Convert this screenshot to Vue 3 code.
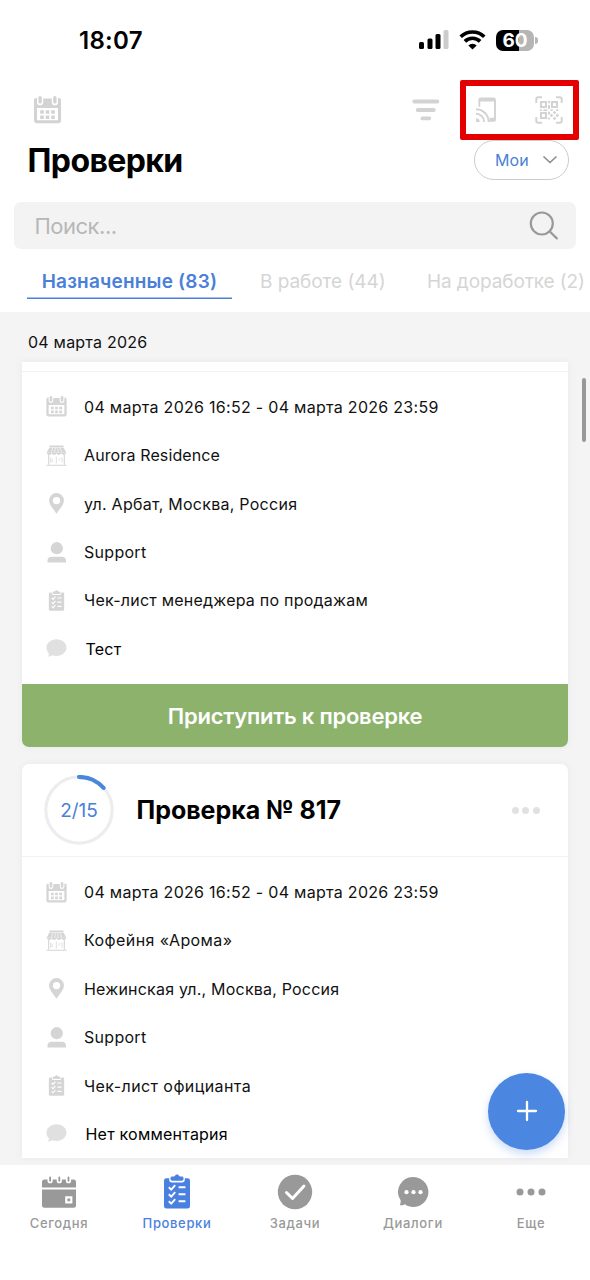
<script setup>
const checks = [
  {
    id: 816,
    first: true,
    rows: [
      ['calendar', '04 марта 2026 16:52 - 04 марта 2026 23:59'],
      ['store', 'Aurora Residence'],
      ['pin', 'ул. Арбат, Москва, Россия'],
      ['user', 'Support'],
      ['list', 'Чек-лист менеджера по продажам'],
      ['comment', 'Тест'],
    ],
  },
  {
    id: 817,
    first: false,
    rows: [
      ['calendar', '04 марта 2026 16:52 - 04 марта 2026 23:59'],
      ['store', 'Кофейня «Арома»'],
      ['pin', 'Нежинская ул., Москва, Россия'],
      ['user', 'Support'],
      ['list', 'Чек-лист официанта'],
      ['comment', 'Нет комментария'],
    ],
  },
]
const nav = [
  ['today', 'Сегодня'],
  ['checks', 'Проверки'],
  ['tasks', 'Задачи'],
  ['dialogs', 'Диалоги'],
  ['more', 'Еще'],
]
</script>

<template>
  <div class="screen">
    <svg class="defs" width="0" height="0">
      <symbol id="calendar" viewBox="0 0 27 28">
        <path d="M2.2 2H3v4.2a3 3 0 0 0 6.2 0V2.6h8.6v3.6a3 3 0 0 0 6.2 0V2h.8A2.2 2.2 0 0 1 27 4.2v20.6a2.4 2.4 0 0 1-2.4 2.4H2.4A2.4 2.4 0 0 1 0 24.8V4.2A2.2 2.2 0 0 1 2.2 2zM3 12v12.200h21V12z" fill="currentColor" fill-rule="evenodd" />
        <rect x="4.400" y="0" width="3.400" height="7.600" rx="1.700" fill="currentColor" />
        <rect x="19.200" y="0" width="3.400" height="7.600" rx="1.700" fill="currentColor" />
        <path d="M6.200 14.200h3.600v3.600H6.200zM11.700 14.200h3.600v3.600h-3.600zM17.200 14.200h3.600v3.600h-3.600zM6.200 19.400h3.600V23H6.200zM11.700 19.400h3.600V23h-3.600zM17.200 19.400h3.600V23h-3.600z" fill="currentColor" />
      </symbol>
      <symbol id="store" viewBox="0 0 20 21">
        <path d="M3 .4h14V2H3zM3 2.600h14l2.800 5H.2z" fill="currentColor" />
        <path d="M6.300 2.600 4.800 7.600M8.800 2.600 8.200 7.600M11.200 2.600l.6 5M13.700 2.600l1.500 5" stroke="#fff" stroke-width=".6" fill="none" />
        <path d="M.4 7.600h19.200c0 3-3.800 3-4.800.6-.9 2.200-4 2.200-4.800 0-.8 2.200-3.900 2.200-4.800 0C4.200 10.600.4 10.600.4 7.600z" fill="currentColor" />
        <path d="M2.200 10v9.500M17.800 10v9.500M0 20.200h20" stroke="currentColor" stroke-width="1.100" fill="none" />
        <path d="M4.200 12.500v5.500M9.800 11.500v7M6.500 13.500l-1.300 2 1.300 1.500M15.500 12.500v5M12 15.500l1.800-2.500" stroke="currentColor" stroke-width=".8" fill="none" />
      </symbol>
      <symbol id="pin" viewBox="0 0 20 21">
        <path d="M10 0a7.400 7.400 0 0 1 7.400 7.400C17.400 12 13.200 15.500 10 20.800 6.800 15.500 2.600 12 2.600 7.400A7.400 7.400 0 0 1 10 0zm0 3.900a3.700 3.700 0 1 0 0 7.400 3.700 3.700 0 0 0 0-7.400z" fill="currentColor" fill-rule="evenodd" />
      </symbol>
      <symbol id="user" viewBox="0 0 20 21">
        <circle cx="10.300" cy="6.200" r="6.100" fill="currentColor" />
        <path d="M1 20.500v-1.700c0-2.500 1.600-4 4-4h10.500c2.400 0 4 1.500 4 4v1.700z" fill="currentColor" />
      </symbol>
      <symbol id="clipboard" viewBox="0 0 26 35">
        <path d="M2.400 4.200h2.800V6a2.400 2.400 0 0 0 2.400 2.400h10.800A2.400 2.400 0 0 0 20.800 6V4.200h2.800A2.400 2.400 0 0 1 26 6.600v25.600a2.400 2.400 0 0 1-2.400 2.400H2.400A2.400 2.400 0 0 1 0 32.200V6.600a2.400 2.400 0 0 1 2.400-2.400z" fill="currentColor" />
        <path d="M8.300 2.600h1.900C11.300 1 12 .4 13 .4s1.700.6 2.800 2.200h1.900c1.200 0 1.800.6 1.800 1.500v1c0 1-.7 1.600-1.800 1.600H8.300c-1.100 0-1.800-.6-1.800-1.600v-1c0-.9.6-1.500 1.800-1.500z" fill="currentColor" />
        <path d="m4.800 13.300 2.400 2.300 4-4.400M4.800 20.300l2.400 2.300 4-4.400M4.800 27.300l2.400 2.300 4-4.400M14.600 13.300h6.800M14.600 20.300h6.800M14.600 27.300h6.800" stroke="#fff" stroke-width="1.900" fill="none" />
      </symbol>
      <symbol id="list" viewBox="0 0 20 21">
        <use href="#clipboard" x="2" y="0" width="16" height="21" />
      </symbol>
      <symbol id="comment" viewBox="0 0 20 21">
        <path d="M10 1.200C15.800 1.200 20 4.900 20 9.600s-4.200 8.300-10 8.300c-1.600 0-3-.2-4.300-.7-1.200.8-2.600 1.200-4.200 1.200.5-.7.900-1.600 1-2.700C.9 14.100 0 12 0 9.600 0 4.900 4.200 1.200 10 1.200z" fill="currentColor" opacity=".75" />
      </symbol>
      <symbol id="today" viewBox="0 0 36 36">
        <path d="M3.500 5.500h3v1.200a2.600 2.600 0 0 0 5.200 0V5.500h4V6.700a2.600 2.600 0 0 0 5.200 0V5.500h4v1.200a2.600 2.600 0 0 0 5.200 0V5.500h2.400A2.500 2.500 0 0 1 35 8v5.500H1V8a2.500 2.500 0 0 1 2.500-2.500zM1 15.500h34v15.700a2.500 2.500 0 0 1-2.500 2.500h-29A2.500 2.500 0 0 1 1 31.200zM24.200 22.200v7.200h7.200v-7.200zM26.400 24.400h2.800v2.800h-2.800z" fill="currentColor" fill-rule="evenodd" />
        <path d="M9.100 3.300v3.500M18.300 3.300v3.500M27.500 3.300v3.500" stroke="currentColor" stroke-width="1.800" stroke-linecap="round" />
      </symbol>
      <symbol id="checks" viewBox="0 0 36 36">
        <use href="#clipboard" x="5" y="0" width="26" height="35" />
      </symbol>
      <symbol id="tasks" viewBox="0 0 36 36">
        <circle cx="18" cy="18" r="17.200" fill="currentColor" />
        <path d="m9.500 18.500 6 6L27 12" stroke="#fff" stroke-width="3" stroke-linecap="round" stroke-linejoin="round" fill="none" />
      </symbol>
      <symbol id="dialogs" viewBox="0 0 36 36">
        <path d="M18.500 3A15 15 0 1 1 9.700 30.200C8.300 31.200 6.500 31.500 4.700 31.300c.8-1.400 1-3.200 1-4.800A15 15 0 0 1 18.500 3z" fill="currentColor" />
        <g fill="#fff"><circle cx="11.500" cy="18.200" r="2.100" /><circle cx="18.500" cy="18.200" r="2.100" /><circle cx="25.500" cy="18.200" r="2.100" /></g>
      </symbol>
      <symbol id="more" viewBox="0 0 36 36">
        <g fill="currentColor"><circle cx="7" cy="18" r="3.500" /><circle cx="18" cy="18" r="3.500" /><circle cx="29" cy="18" r="3.500" /></g>
      </symbol>
    </svg>

    <header class="top">
      <div class="status">
        <span class="time">18:07</span>
        <svg class="signal" width="30" height="20" viewBox="0 0 30 20">
          <rect x="0" y="12" width="5" height="7" rx="1.500" />
          <rect x="8.500" y="8.500" width="5" height="10.500" rx="1.500" />
          <rect x="16.500" y="4" width="5" height="15" rx="1.500" />
          <rect x="24.500" y="0" width="5" height="19" rx="1.500" fill="#ccc" />
        </svg>
        <svg class="wifi" width="27" height="20" viewBox="0 0 27 20">
          <path d="M1.700 6.800a16.800 16.800 0 0 1 23.600 0M5.900 11.400a10.800 10.800 0 0 1 15.200 0" fill="none" stroke="#000" stroke-width="3.600" />
          <path d="M13.500 19.500 9.300 15.400a6 6 0 0 1 8.400 0z" />
        </svg>
        <div class="battery"><span>60</span></div>
        <i class="cap"></i>
      </div>

      <div class="tools">
        <svg class="tool-cal" width="27" height="28"><use href="#calendar" /></svg>
        <svg class="filter" width="28" height="22" viewBox="0 0 28 22">
          <path d="M2.200 2.500h23.200M5.700 11h16.100M10.400 19.300h6.900" stroke="currentColor" stroke-width="3.800" stroke-linecap="round" />
        </svg>
        <div class="marked">
          <svg width="21" height="26" viewBox="0 0 21 26">
            <path d="M3.300 9.700V3.200c0-1 .5-1.700 1.600-1.700h12.500c1 0 1.600.7 1.600 1.700v19.600c0 .6-.4 1-1 1h-4.800" fill="none" stroke="currentColor" stroke-width="1.900" />
            <path d="M3.300 3h15.600M13.800 22.300H19" stroke="currentColor" stroke-width="3" />
            <path d="M0 21.300a3.700 3.700 0 0 1 3.700 3.700H0z" fill="currentColor" />
            <path d="M0 16.800A8.200 8.200 0 0 1 8.200 25M0 12.300A12.700 12.700 0 0 1 12.700 25" fill="none" stroke="currentColor" stroke-width="1.900" />
          </svg>
          <svg width="28" height="28" viewBox="0 0 28 28">
            <g fill="none" stroke="currentColor" stroke-width="2">
              <path d="M1.300 7V3.300c0-1.300.7-2 2-2H7M21 1.300h3.700c1.300 0 2 .7 2 2V7M26.700 21v3.700c0 1.300-.7 2-2 2H21M7 26.700H3.300c-1.300 0-2-.7-2-2V21" />
              <path d="M6 6h5v5H6zM17 6h5v5h-5zM6 17h5v5H6z" />
            </g>
            <path d="M13 4.800h2v2.500h-2zM13 9h2v4h-2zM4.800 13.200h2v1.800h-2zM8.500 13.200h3.800V15H8.500zM15.500 13.200h2.300V15h-2.300zM21 13.200h2.200V15H21zM13 15.800h2v2.600h-2zM19.500 14.800l1.800 1.800-1.800 1.800-1.800-1.800zM16.500 17.600l1.800 1.800-1.800 1.800-1.800-1.800zM22.300 17.600l1.800 1.800-1.800 1.800-1.800-1.800zM13 21.500h1.800v2H13zM19.500 20.600l1.800 1.800-1.800 1.800-1.800-1.800z" fill="currentColor" />
          </svg>
        </div>
      </div>

      <div class="title-row">
        <h1>Проверки</h1>
        <button class="pill">
          <span>Мои</span>
          <svg width="16" height="10" viewBox="0 0 16 10"><path d="m1.500 1.500 6.500 6 6.500-6" fill="none" stroke="#8b8b8b" stroke-width="1.600" /></svg>
        </button>
      </div>

      <div class="search">
        <span>Поиск...</span>
        <svg width="30" height="30" viewBox="0 0 30 30"><g fill="none" stroke="#999" stroke-width="2.200"><circle cx="12.800" cy="12.500" r="11" /><path d="m20.600 20.200 7.200 7.200" stroke-linecap="round" /></g></svg>
      </div>

      <div class="tabs">
        <span class="tab active">Назначенные (83)</span>
        <span class="tab t2">В работе (44)</span>
        <span class="tab t3">На доработке (2)</span>
      </div>
    </header>

    <main class="feed">
      <div class="date">04 марта 2026</div>
      <article v-for="c in checks" :key="c.id" class="card" :class="c.first ? 'clipped' : 'full'">
        <div v-if="c.first" class="head-rest"></div>
        <div v-else class="head">
          <div class="ring">
            <svg width="70" height="70" viewBox="0 0 70 70">
              <circle cx="35" cy="35" r="33.200" fill="none" stroke="#ededed" stroke-width="3.200" />
              <path d="M35 1.900A33.100 33.100 0 0 1 59.600 12.900" fill="none" stroke="#4a86dc" stroke-width="4" stroke-linecap="round" />
            </svg>
            <span>2/15</span>
          </div>
          <h2>Проверка № {{ c.id }}</h2>
          <div class="dots"><i></i><i></i><i></i></div>
        </div>
        <ul>
          <li v-for="[icon, text] in c.rows" :key="icon" :class="icon">
            <svg width="21" height="21"><use :href="'#' + icon" /></svg>
            <span>{{ text }}</span>
          </li>
        </ul>
        <button v-if="c.first" class="start">Приступить к проверке</button>
      </article>
      <div class="scrollbar"></div>
      <button class="fab">
        <svg width="22" height="22" viewBox="0 0 22 22"><path d="M11 2v18M2 11h18" stroke="#fff" stroke-width="2.300" stroke-linecap="round" /></svg>
      </button>
    </main>

    <nav class="bar">
      <div v-for="[icon, label] in nav" :key="icon" class="item" :class="{ on: icon === 'checks' }">
        <svg width="36" height="36"><use :href="'#' + icon" /></svg>
        <span>{{ label }}</span>
      </div>
    </nav>
  </div>
</template>

<style>
body { margin: 0; background: #fff; }
</style>

<style scoped>
* { box-sizing: border-box; }
.screen { width: 590px; height: 1280px; overflow: hidden; display: flex; flex-direction: column; background: #fff; font-family: Inter, "Liberation Sans", sans-serif; color: #111; white-space: nowrap; }
.defs { position: absolute; }
button { border: 0; padding: 0; font: inherit; }
.top { height: 312px; flex: none; }
.status { height: 80px; display: flex; align-items: center; padding-left: 79px; }
.time { width: 340px; font-size: 24px; font-weight: 600; letter-spacing: .3px; color: #000; }
.signal { margin-right: 10px; }
.wifi { margin-right: 10px; }
.battery { width: 38px; height: 21px; border-radius: 7px; background: linear-gradient(90deg, #000 60%, #b5b5b5 60%); color: #fff; font-size: 19px; font-weight: 700; line-height: 21px; text-align: center; }
.cap { width: 3px; height: 7px; margin-left: 1px; border-radius: 0 3px 3px 0; background: #b5b5b5; }
.tools { height: 60px; display: flex; align-items: center; color: #d3d3d3; padding-left: 34px; }
.filter { margin: 0 20px 0 351px; }
.tool-cal { flex: none; }
.marked { width: 119px; height: 60px; border: 6px solid #e40000; border-radius: 2px; display: flex; align-items: center; justify-content: space-between; padding: 0 10px; }
.title-row { height: 40px; display: flex; align-items: center; justify-content: space-between; padding: 0 21px 0 27.500px; }
h1 { margin: 0; padding-top: 2px; font-size: 32px; font-weight: 700; letter-spacing: -.6px; line-height: 40px; color: #000; }
.pill { width: 95px; height: 40px; border: 1px solid #ccc; border-radius: 20px; background: #fff; display: flex; align-items: center; justify-content: space-between; padding: 0 10px 0 20px; color: #4a7fd6; font-size: 16px; letter-spacing: .1px; }
.search { height: 47px; margin: 22px 14px 0; padding: 0 17px 0 20.500px; border-radius: 7px; background: #f3f3f3; display: flex; align-items: center; justify-content: space-between; color: #b7b7b7; font-size: 22px; letter-spacing: -.5px; }
.tabs { display: flex; padding: 14px 0 0 27px; height: 63px; font-size: 19px; color: #d5d5d5; line-height: 37px; letter-spacing: -.05px; overflow: hidden; }
.tab { flex: none; height: 36px; }
.active { width: 205px; text-align: center; color: #4a80d9; font-weight: 600; letter-spacing: .2px; box-shadow: inset 0 -1.500px #4a80d9; }
.t2 { margin-left: 28px; width: 167px; }
.t3 { letter-spacing: -.1px; }
.feed { position: relative; height: 853px; flex: none; overflow: hidden; background: #f4f4f4; }
.date { height: 50px; padding: 0 28px; line-height: 60px; font-size: 16px; letter-spacing: .22px; }
.card { width: 546px; margin: 0 0 17px 22px; border-radius: 7px; background: #fff; box-shadow: 0 0 8px rgba(0, 0, 0, .05); }
.clipped { border-radius: 0 0 7px 7px; }
.full { height: 394px; border-radius: 7px 7px 0 0; }
.head-rest { height: 10px; border-bottom: 1px solid #f2f2f2; }
.head { height: 93px; border-bottom: 1px solid #f2f2f2; display: flex; align-items: center; padding: 0 28.500px 0 22px; }
.ring { width: 70px; height: 70px; display: grid; }
.ring > * { grid-area: 1 / 1; place-self: center; }
.ring span { color: #4a80d9; font-size: 19px; }
h2 { flex: 1; margin: 0 0 0 22.500px; font-size: 25px; font-weight: 700; letter-spacing: -.03px; color: #000; }
.dots { display: flex; gap: 3.500px; }
.dots i { width: 7px; height: 7px; border-radius: 50%; background: #e1e1e1; }
ul { margin: 0; padding: 10.700px 0 11.300px 24px; list-style: none; }
.full ul { padding-top: 10.500px; }
li { height: 48.400px; display: flex; align-items: center; gap: 17px; font-size: 16px; letter-spacing: .29px; }
li svg { color: #d5d5d5; }
.store span { letter-spacing: .12px; }
.clipped .pin span { letter-spacing: .26px; }
.clipped .list span { letter-spacing: .23px; }
.full .store span, .full .list span { letter-spacing: .42px; }
.full .pin span { letter-spacing: .2px; }
.comment span { margin-left: 1.500px; color: #000; letter-spacing: .22px; }
.start { display: block; width: 546px; height: 63px; border-radius: 0 0 7px 7px; background: #8cb26b; color: #fff; font-size: 22px; font-weight: 600; letter-spacing: -.25px; }
.scrollbar { position: absolute; left: 582px; top: 66px; width: 4px; height: 64px; border-radius: 2px; background: #989898; }
.fab { position: absolute; left: 488px; top: 760.500px; width: 77px; height: 77px; border-radius: 50%; background: #4b86e1; box-shadow: 0 4px 9px rgba(75, 134, 225, .3); display: flex; align-items: center; justify-content: center; }
.bar { height: 115px; flex: none; display: flex; padding-top: 9px; background: #fff; color: #999; }
.item { width: 118px; display: flex; flex-direction: column; align-items: center; gap: 5px; font-size: 13px; line-height: 16px; font-weight: 500; letter-spacing: .65px; }
.item svg { margin-left: -1px; }
.item:last-child svg { margin-left: 0; }
.on { color: #4a80e0; }
</style>
